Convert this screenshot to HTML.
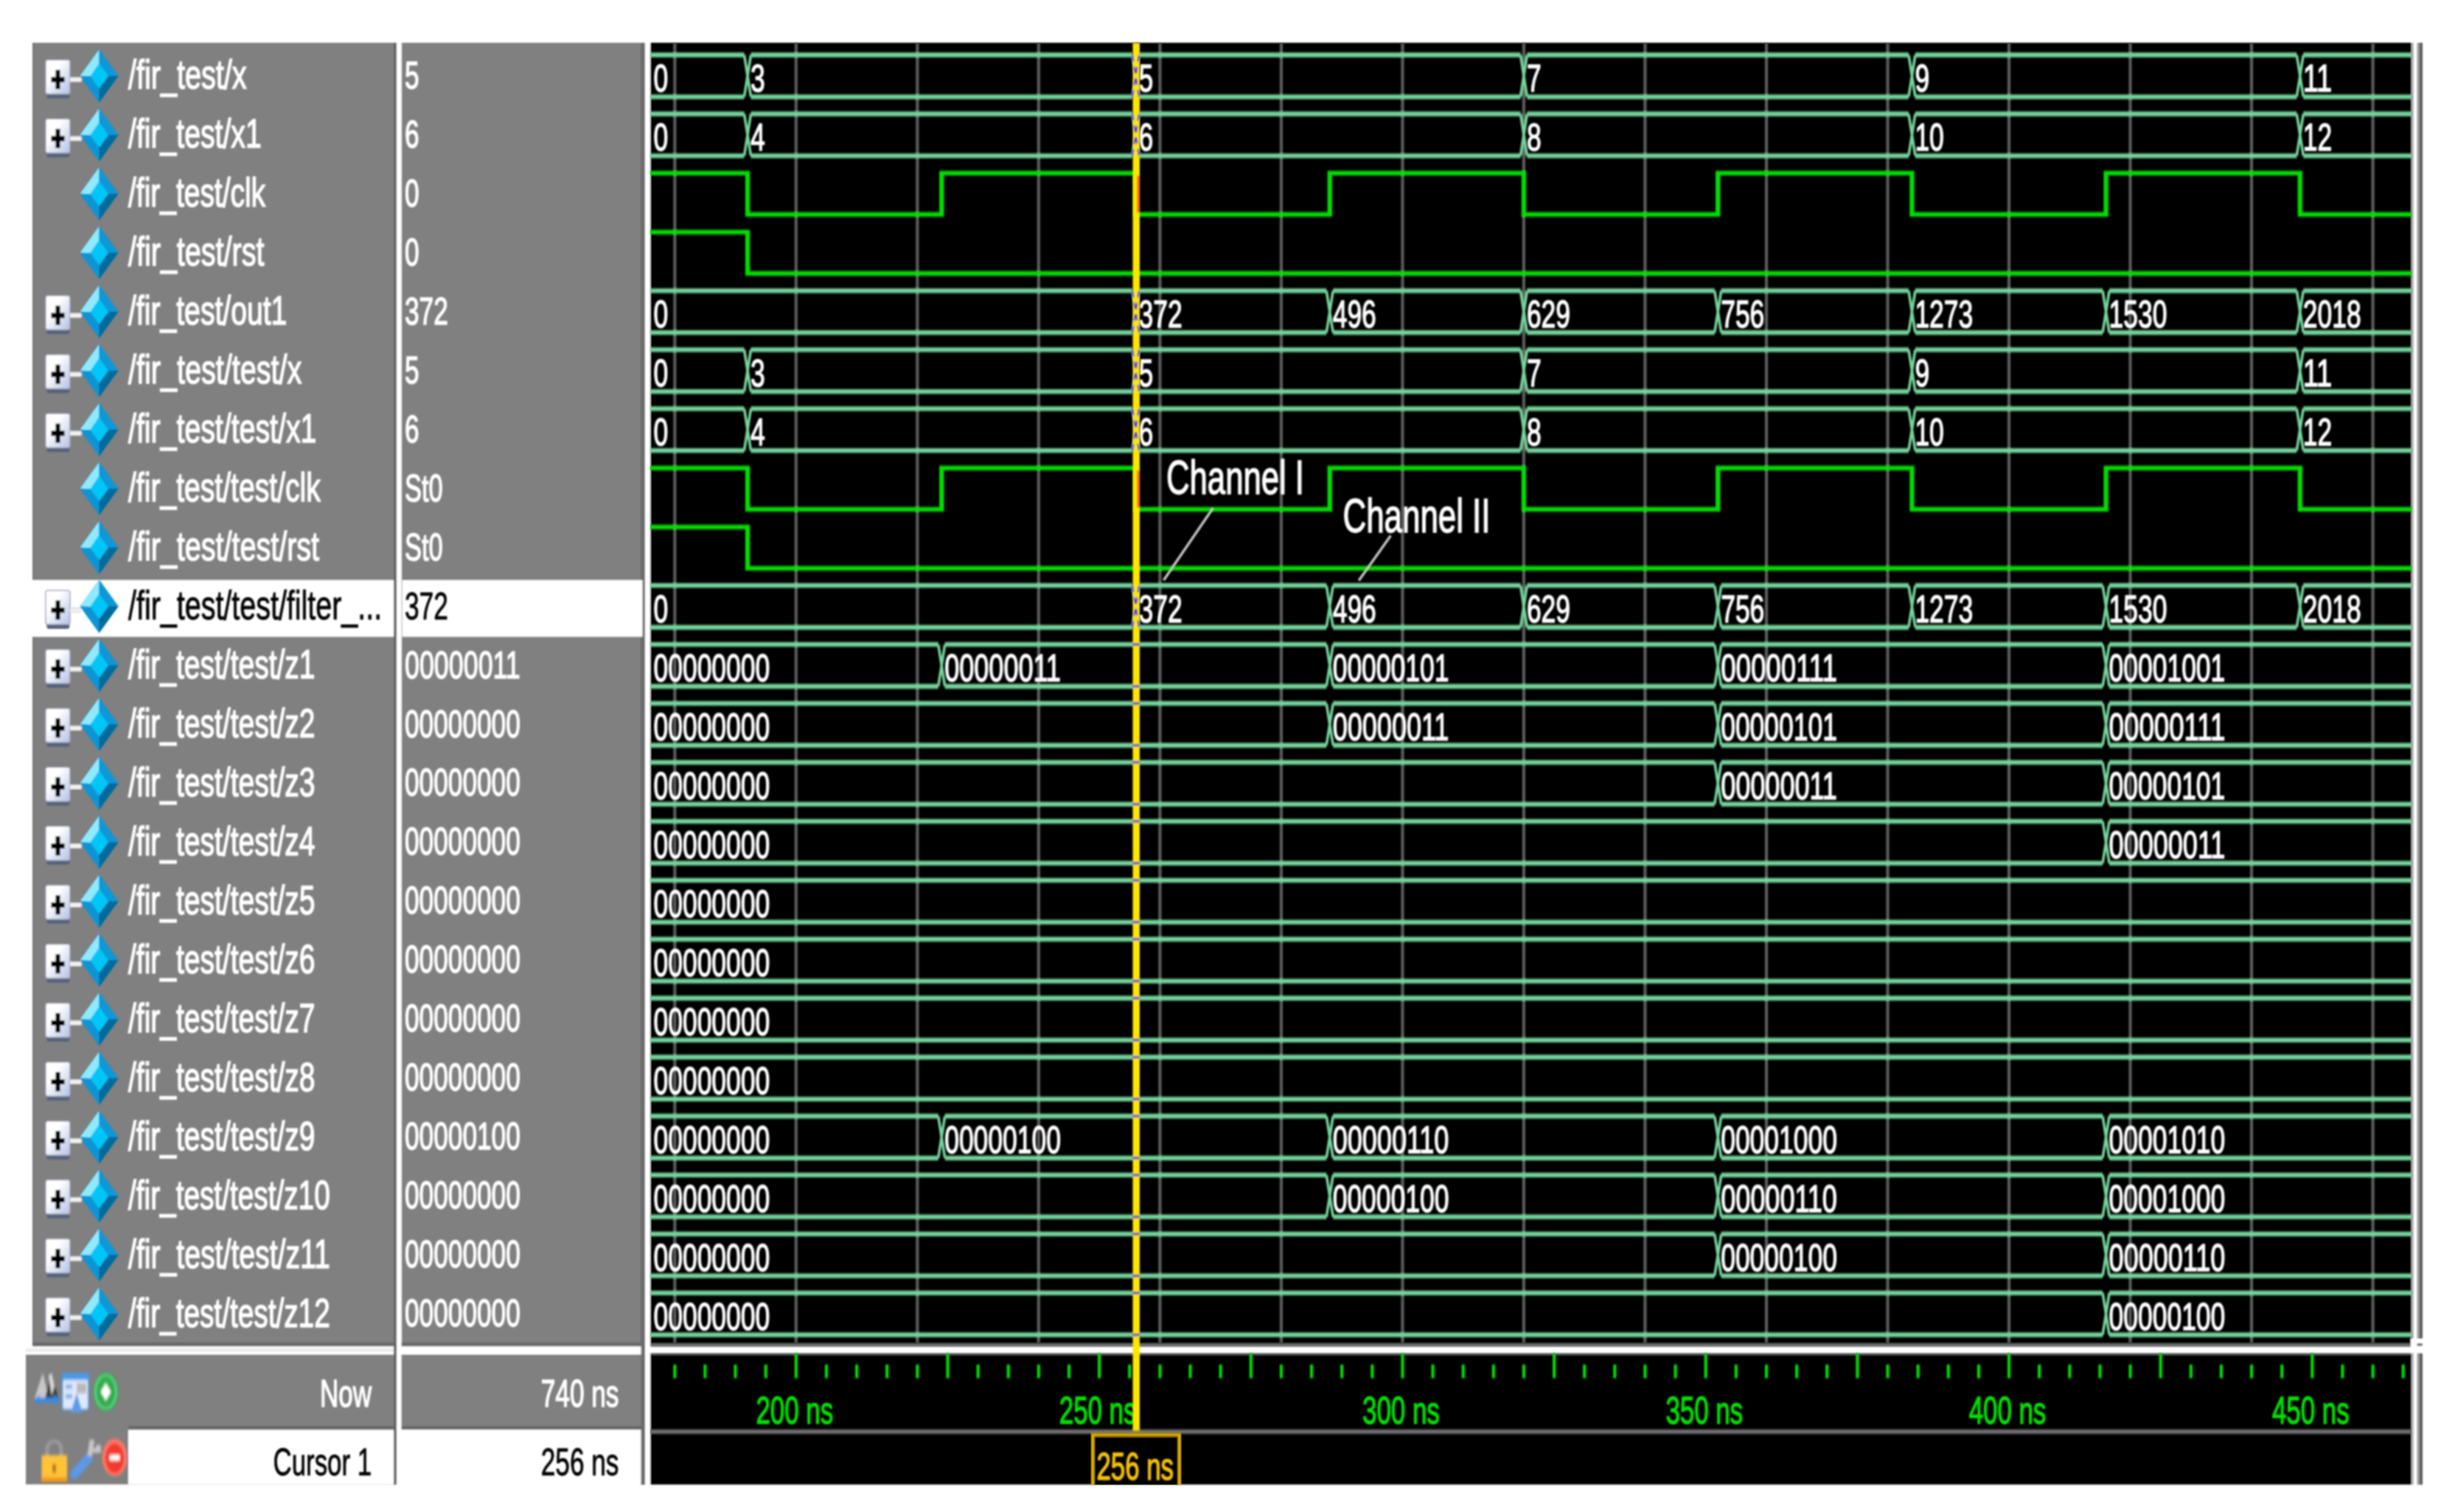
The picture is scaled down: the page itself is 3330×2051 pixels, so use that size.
<!DOCTYPE html>
<html lang="en"><head><meta charset="utf-8"><title>wave</title>
<style>html,body{margin:0;padding:0;background:#fff}body{width:3330px;height:2051px;overflow:hidden}svg{display:block}text{white-space:pre}</style></head>
<body>
<svg width="3330" height="2051" viewBox="0 0 3330 2051" font-family="'Liberation Sans', sans-serif">
<defs><filter id="bl" x="-2%" y="-2%" width="104%" height="104%"><feGaussianBlur stdDeviation="1.3 1.5"/></filter><filter id="bi" x="-5%" y="-5%" width="110%" height="110%"><feGaussianBlur stdDeviation="1.8 2.0"/></filter><filter id="bt" x="-2%" y="-2%" width="104%" height="104%"><feGaussianBlur stdDeviation="1.1 1.3"/></filter><linearGradient id="pb" x1="0" y1="0" x2="1" y2="1"><stop offset="0.35" stop-color="#ffffff"/><stop offset="1" stop-color="#b4c0e6"/></linearGradient><g id="dia"><polygon points="0,-36 26,0 0,36 -26,0" fill="#0a86c2"/><polygon points="0,-36 0,-17 -12,0.5 -26,0" fill="#8eeaff"/><polygon points="0,-36 26,0 12.5,0 0,-17" fill="#0a98d8"/><polygon points="-26,0 -12,0.5 0,17 0,36" fill="#0a94d4"/><polygon points="26,0 0,36 0,17 12.5,0" fill="#056a9c"/><polygon points="0,-17 12.5,0 0,17 -12,0.5" fill="#06c6f8"/></g><g id="plus"><rect x="-15.2" y="-20" width="31" height="46.2" rx="3" fill="#56637c"/><rect x="-16.6" y="-26.0" width="33" height="46.2" rx="3" fill="url(#pb)" stroke="#a4a8b8" stroke-width="1.5"/><rect x="-9" y="-2.7" width="18" height="7" fill="#000"/><rect x="-3" y="-12.4" width="6" height="26" fill="#000"/><rect x="16.5" y="-2.8" width="15.5" height="7" fill="#dcdcdc"/><rect x="16.5" y="-0.8" width="15.5" height="3.5" fill="#f4f4f4"/></g></defs>
<rect x="0.0" y="0.0" width="3330.0" height="2051.0" fill="#fff"/>
<g filter="url(#bt)">
<rect x="44.0" y="58.0" width="490.0" height="1764.0" fill="#808080"/>
<rect x="44.0" y="58.0" width="2.5" height="1764.0" fill="#767676"/>
<rect x="544.5" y="58.0" width="325.0" height="1764.0" fill="#808080"/>
<rect x="534.0" y="58.0" width="4.2" height="1956.0" fill="#666"/>
<rect x="538.2" y="58.0" width="6.3" height="1956.0" fill="#fff"/>
<rect x="869.0" y="58.0" width="6.0" height="1956.0" fill="#6c6c6c"/>
<rect x="875.0" y="58.0" width="7.5" height="1956.0" fill="#fff"/>
<rect x="44.0" y="786.9" width="490.0" height="76.8" fill="#fff"/>
<rect x="545.5" y="786.9" width="326.0" height="76.8" fill="#fff"/>
<rect x="44.0" y="1821.0" width="490.0" height="5.5" fill="#6a6a6a"/>
<rect x="544.5" y="1821.0" width="325.0" height="5.5" fill="#6a6a6a"/>
<rect x="35.0" y="1826.5" width="499.0" height="11.0" fill="#fff"/>
<rect x="544.5" y="1826.5" width="325.0" height="11.0" fill="#fff"/>
<rect x="35.0" y="1829.0" width="499.0" height="5.0" fill="#ececec"/>
<rect x="35.0" y="1837.5" width="499.0" height="176.0" fill="#808080"/>
<rect x="544.5" y="1837.5" width="325.0" height="98.0" fill="#808080"/>
<rect x="174.0" y="1934.5" width="360.0" height="5.0" fill="#666"/>
<rect x="544.5" y="1934.5" width="325.0" height="5.0" fill="#666"/>
<rect x="174.0" y="1939.5" width="360.0" height="74.0" fill="#fff"/>
<rect x="544.5" y="1939.5" width="325.0" height="74.0" fill="#fff"/>
<rect x="882.0" y="58.0" width="2389.0" height="1765.0" fill="#000"/>
<rect x="882.0" y="1822.5" width="2389.0" height="4.5" fill="#707070"/>
<rect x="882.0" y="1835.5" width="2389.0" height="3.0" fill="#555"/>
<rect x="882.0" y="1838.0" width="2389.0" height="175.7" fill="#000"/>
<rect x="3271.0" y="58.0" width="3.0" height="1956.0" fill="#b8b8b8"/>
<rect x="3278.6" y="58.0" width="3.4" height="1956.0" fill="#9a9a9a"/>
<rect x="3282.0" y="58.0" width="4.0" height="1956.0" fill="#5c5c5c"/>
<rect x="3270.0" y="1816.0" width="20.0" height="19.5" fill="#fff"/>
<rect x="3278.6" y="1822.0" width="7.4" height="4.0" fill="#777"/>
</g>
<g filter="url(#bt)">
<use href="#plus" x="78.5" y="107.2"/>
<use href="#dia" x="134.5" y="102.9"/>
<text x="174.0" y="120.3" font-size="55" fill="#fff" stroke="#fff" stroke-width="1.5" textLength="160.6" lengthAdjust="spacingAndGlyphs">/fir_test/x</text>
<text x="549.0" y="119.8" font-size="52" fill="#fff" stroke="#fff" stroke-width="1.5" textLength="19.6" lengthAdjust="spacingAndGlyphs">5</text>
<use href="#plus" x="78.5" y="187.2"/>
<use href="#dia" x="134.5" y="182.9"/>
<text x="174.0" y="200.3" font-size="55" fill="#fff" stroke="#fff" stroke-width="1.5" textLength="180.7" lengthAdjust="spacingAndGlyphs">/fir_test/x1</text>
<text x="549.0" y="199.8" font-size="52" fill="#fff" stroke="#fff" stroke-width="1.5" textLength="19.6" lengthAdjust="spacingAndGlyphs">6</text>
<use href="#dia" x="134.5" y="262.8"/>
<text x="174.0" y="280.2" font-size="55" fill="#fff" stroke="#fff" stroke-width="1.5" textLength="186.1" lengthAdjust="spacingAndGlyphs">/fir_test/clk</text>
<text x="549.0" y="279.7" font-size="52" fill="#fff" stroke="#fff" stroke-width="1.5" textLength="19.6" lengthAdjust="spacingAndGlyphs">0</text>
<use href="#dia" x="134.5" y="342.8"/>
<text x="174.0" y="360.2" font-size="55" fill="#fff" stroke="#fff" stroke-width="1.5" textLength="184.4" lengthAdjust="spacingAndGlyphs">/fir_test/rst</text>
<text x="549.0" y="359.7" font-size="52" fill="#fff" stroke="#fff" stroke-width="1.5" textLength="19.6" lengthAdjust="spacingAndGlyphs">0</text>
<use href="#plus" x="78.5" y="427.1"/>
<use href="#dia" x="134.5" y="422.8"/>
<text x="174.0" y="440.2" font-size="55" fill="#fff" stroke="#fff" stroke-width="1.5" textLength="215.4" lengthAdjust="spacingAndGlyphs">/fir_test/out1</text>
<text x="549.0" y="439.7" font-size="52" fill="#fff" stroke="#fff" stroke-width="1.5" textLength="58.8" lengthAdjust="spacingAndGlyphs">372</text>
<use href="#plus" x="78.5" y="507.1"/>
<use href="#dia" x="134.5" y="502.8"/>
<text x="174.0" y="520.1" font-size="55" fill="#fff" stroke="#fff" stroke-width="1.5" textLength="235.2" lengthAdjust="spacingAndGlyphs">/fir_test/test/x</text>
<text x="549.0" y="519.6" font-size="52" fill="#fff" stroke="#fff" stroke-width="1.5" textLength="19.6" lengthAdjust="spacingAndGlyphs">5</text>
<use href="#plus" x="78.5" y="587.0"/>
<use href="#dia" x="134.5" y="582.7"/>
<text x="174.0" y="600.1" font-size="55" fill="#fff" stroke="#fff" stroke-width="1.5" textLength="255.4" lengthAdjust="spacingAndGlyphs">/fir_test/test/x1</text>
<text x="549.0" y="599.6" font-size="52" fill="#fff" stroke="#fff" stroke-width="1.5" textLength="19.6" lengthAdjust="spacingAndGlyphs">6</text>
<use href="#dia" x="134.5" y="662.7"/>
<text x="174.0" y="680.1" font-size="55" fill="#fff" stroke="#fff" stroke-width="1.5" textLength="260.8" lengthAdjust="spacingAndGlyphs">/fir_test/test/clk</text>
<text x="549.0" y="679.6" font-size="52" fill="#fff" stroke="#fff" stroke-width="1.5" textLength="51.6" lengthAdjust="spacingAndGlyphs">St0</text>
<use href="#dia" x="134.5" y="742.7"/>
<text x="174.0" y="760.1" font-size="55" fill="#fff" stroke="#fff" stroke-width="1.5" textLength="259.1" lengthAdjust="spacingAndGlyphs">/fir_test/test/rst</text>
<text x="549.0" y="759.6" font-size="52" fill="#fff" stroke="#fff" stroke-width="1.5" textLength="51.6" lengthAdjust="spacingAndGlyphs">St0</text>
<use href="#plus" x="78.5" y="826.9"/>
<use href="#dia" x="134.5" y="822.6"/>
<text x="174.0" y="840.0" font-size="55" fill="#000" stroke="#000" stroke-width="0.9" textLength="344.2" lengthAdjust="spacingAndGlyphs">/fir_test/test/filter_...</text>
<text x="549.0" y="839.5" font-size="52" fill="#000" stroke="#000" stroke-width="0.9" textLength="58.8" lengthAdjust="spacingAndGlyphs">372</text>
<use href="#plus" x="78.5" y="906.9"/>
<use href="#dia" x="134.5" y="902.6"/>
<text x="174.0" y="920.0" font-size="55" fill="#fff" stroke="#fff" stroke-width="1.5" textLength="253.5" lengthAdjust="spacingAndGlyphs">/fir_test/test/z1</text>
<text x="549.0" y="919.5" font-size="52" fill="#fff" stroke="#fff" stroke-width="1.5" textLength="156.8" lengthAdjust="spacingAndGlyphs">00000011</text>
<use href="#plus" x="78.5" y="986.9"/>
<use href="#dia" x="134.5" y="982.6"/>
<text x="174.0" y="1000.0" font-size="55" fill="#fff" stroke="#fff" stroke-width="1.5" textLength="253.5" lengthAdjust="spacingAndGlyphs">/fir_test/test/z2</text>
<text x="549.0" y="999.5" font-size="52" fill="#fff" stroke="#fff" stroke-width="1.5" textLength="156.8" lengthAdjust="spacingAndGlyphs">00000000</text>
<use href="#plus" x="78.5" y="1066.8"/>
<use href="#dia" x="134.5" y="1062.5"/>
<text x="174.0" y="1079.9" font-size="55" fill="#fff" stroke="#fff" stroke-width="1.5" textLength="253.5" lengthAdjust="spacingAndGlyphs">/fir_test/test/z3</text>
<text x="549.0" y="1079.4" font-size="52" fill="#fff" stroke="#fff" stroke-width="1.5" textLength="156.8" lengthAdjust="spacingAndGlyphs">00000000</text>
<use href="#plus" x="78.5" y="1146.8"/>
<use href="#dia" x="134.5" y="1142.5"/>
<text x="174.0" y="1159.9" font-size="55" fill="#fff" stroke="#fff" stroke-width="1.5" textLength="253.5" lengthAdjust="spacingAndGlyphs">/fir_test/test/z4</text>
<text x="549.0" y="1159.4" font-size="52" fill="#fff" stroke="#fff" stroke-width="1.5" textLength="156.8" lengthAdjust="spacingAndGlyphs">00000000</text>
<use href="#plus" x="78.5" y="1226.8"/>
<use href="#dia" x="134.5" y="1222.5"/>
<text x="174.0" y="1239.9" font-size="55" fill="#fff" stroke="#fff" stroke-width="1.5" textLength="253.5" lengthAdjust="spacingAndGlyphs">/fir_test/test/z5</text>
<text x="549.0" y="1239.4" font-size="52" fill="#fff" stroke="#fff" stroke-width="1.5" textLength="156.8" lengthAdjust="spacingAndGlyphs">00000000</text>
<use href="#plus" x="78.5" y="1306.8"/>
<use href="#dia" x="134.5" y="1302.5"/>
<text x="174.0" y="1319.8" font-size="55" fill="#fff" stroke="#fff" stroke-width="1.5" textLength="253.5" lengthAdjust="spacingAndGlyphs">/fir_test/test/z6</text>
<text x="549.0" y="1319.3" font-size="52" fill="#fff" stroke="#fff" stroke-width="1.5" textLength="156.8" lengthAdjust="spacingAndGlyphs">00000000</text>
<use href="#plus" x="78.5" y="1386.7"/>
<use href="#dia" x="134.5" y="1382.4"/>
<text x="174.0" y="1399.8" font-size="55" fill="#fff" stroke="#fff" stroke-width="1.5" textLength="253.5" lengthAdjust="spacingAndGlyphs">/fir_test/test/z7</text>
<text x="549.0" y="1399.3" font-size="52" fill="#fff" stroke="#fff" stroke-width="1.5" textLength="156.8" lengthAdjust="spacingAndGlyphs">00000000</text>
<use href="#plus" x="78.5" y="1466.7"/>
<use href="#dia" x="134.5" y="1462.4"/>
<text x="174.0" y="1479.8" font-size="55" fill="#fff" stroke="#fff" stroke-width="1.5" textLength="253.5" lengthAdjust="spacingAndGlyphs">/fir_test/test/z8</text>
<text x="549.0" y="1479.3" font-size="52" fill="#fff" stroke="#fff" stroke-width="1.5" textLength="156.8" lengthAdjust="spacingAndGlyphs">00000000</text>
<use href="#plus" x="78.5" y="1546.7"/>
<use href="#dia" x="134.5" y="1542.4"/>
<text x="174.0" y="1559.8" font-size="55" fill="#fff" stroke="#fff" stroke-width="1.5" textLength="253.5" lengthAdjust="spacingAndGlyphs">/fir_test/test/z9</text>
<text x="549.0" y="1559.3" font-size="52" fill="#fff" stroke="#fff" stroke-width="1.5" textLength="156.8" lengthAdjust="spacingAndGlyphs">00000100</text>
<use href="#plus" x="78.5" y="1626.6"/>
<use href="#dia" x="134.5" y="1622.3"/>
<text x="174.0" y="1639.7" font-size="55" fill="#fff" stroke="#fff" stroke-width="1.5" textLength="273.7" lengthAdjust="spacingAndGlyphs">/fir_test/test/z10</text>
<text x="549.0" y="1639.2" font-size="52" fill="#fff" stroke="#fff" stroke-width="1.5" textLength="156.8" lengthAdjust="spacingAndGlyphs">00000000</text>
<use href="#plus" x="78.5" y="1706.6"/>
<use href="#dia" x="134.5" y="1702.3"/>
<text x="174.0" y="1719.7" font-size="55" fill="#fff" stroke="#fff" stroke-width="1.5" textLength="273.7" lengthAdjust="spacingAndGlyphs">/fir_test/test/z11</text>
<text x="549.0" y="1719.2" font-size="52" fill="#fff" stroke="#fff" stroke-width="1.5" textLength="156.8" lengthAdjust="spacingAndGlyphs">00000000</text>
<use href="#plus" x="78.5" y="1786.6"/>
<use href="#dia" x="134.5" y="1782.3"/>
<text x="174.0" y="1799.7" font-size="55" fill="#fff" stroke="#fff" stroke-width="1.5" textLength="273.7" lengthAdjust="spacingAndGlyphs">/fir_test/test/z12</text>
<text x="549.0" y="1799.2" font-size="52" fill="#fff" stroke="#fff" stroke-width="1.5" textLength="156.8" lengthAdjust="spacingAndGlyphs">00000000</text>
</g>
<g filter="url(#bt)">
<text x="434.0" y="1907.5" font-size="52" fill="#fff" stroke="#fff" stroke-width="1.5" textLength="70.0" lengthAdjust="spacingAndGlyphs">Now</text>
<text x="370.6" y="2001.0" font-size="52" fill="#000" stroke="#000" stroke-width="0.9" textLength="133.4" lengthAdjust="spacingAndGlyphs">Cursor 1</text>
<text x="733.7" y="1907.5" font-size="52" fill="#fff" stroke="#fff" stroke-width="1.5" textLength="105.8" lengthAdjust="spacingAndGlyphs">740 ns</text>
<text x="733.7" y="2001.0" font-size="52" fill="#000" stroke="#000" stroke-width="0.9" textLength="105.8" lengthAdjust="spacingAndGlyphs">256 ns</text>
</g>
<g filter="url(#bi)">
<polygon points="47,1897 58,1862 66,1897" fill="#c8c8c8"/>
<polygon points="61,1897 70,1862 79,1897" fill="#3a3a3a"/>
<polygon points="66,1866 70,1862 74,1880 70,1893" fill="#d8d8d8"/>
<rect x="50" y="1896" width="27" height="6" fill="#2f8cf0"/>
<polygon points="46,1899 54,1892 54,1906" fill="#2f8cf0"/><polygon points="81,1899 73,1892 73,1906" fill="#2f8cf0"/>
<rect x="84.5" y="1863" width="35.5" height="49" rx="2" fill="#dfe9fa" stroke="#4a94e6" stroke-width="2"/>
<rect x="84.5" y="1863" width="35.5" height="9" fill="#4a9ae8"/>
<rect x="89" y="1878" width="9" height="6" fill="#7fb0f0"/><rect x="89" y="1891" width="9" height="6" fill="#7fb0f0"/>
<rect x="104" y="1876" width="13" height="14" fill="#b9b9b9"/>
<polygon points="96,1916 104,1890 112,1916" fill="#5a9bea"/>
<ellipse cx="143.5" cy="1888" rx="17" ry="26.5" fill="#2fae4e"/>
<ellipse cx="143.5" cy="1888" rx="14" ry="22.5" fill="none" stroke="#62cf80" stroke-width="3"/>
<polygon points="143.5,1876 150.5,1888 143.5,1900 136.5,1888" fill="#fff"/>
<path d="M64,1976 V1966 a9.5,11 0 0 1 19,0 V1976" fill="none" stroke="#9a9a9a" stroke-width="5"/>
<rect x="56.5" y="1974" width="34.5" height="36" fill="#ffc338"/>
<rect x="56.5" y="2004" width="34.5" height="6" fill="#f59a14"/>
<rect x="71" y="1986" width="5" height="12" fill="#b87818"/>
<line x1="101" y1="2000" x2="120" y2="1978" stroke="#5b98ea" stroke-width="12" stroke-linecap="round"/>
<path d="M121.5,1975 L125,1953 M125,1967.5 L133.5,1967.5 L133.5,1960" fill="none" stroke="#c6c6c6" stroke-width="6.5"/>
<ellipse cx="155.5" cy="1977" rx="17" ry="25.5" fill="#ff7468"/>
<ellipse cx="155.5" cy="1978" rx="12.5" ry="20" fill="#f23a2c"/>
<rect x="148.5" y="1973.5" width="14" height="7.5" fill="#fff"/>
</g>
<clipPath id="wc"><rect x="882" y="58" width="2389" height="1956"/></clipPath>
<g clip-path="url(#wc)"><g filter="url(#bl)">
<line x1="915.3" y1="58.0" x2="915.3" y2="1822.0" stroke="#5c5c5c" stroke-width="4.2"/>
<line x1="1079.8" y1="58.0" x2="1079.8" y2="1822.0" stroke="#5c5c5c" stroke-width="4.2"/>
<line x1="1244.3" y1="58.0" x2="1244.3" y2="1822.0" stroke="#5c5c5c" stroke-width="4.2"/>
<line x1="1408.8" y1="58.0" x2="1408.8" y2="1822.0" stroke="#5c5c5c" stroke-width="4.2"/>
<line x1="1573.4" y1="58.0" x2="1573.4" y2="1822.0" stroke="#5c5c5c" stroke-width="4.2"/>
<line x1="1737.9" y1="58.0" x2="1737.9" y2="1822.0" stroke="#5c5c5c" stroke-width="4.2"/>
<line x1="1902.4" y1="58.0" x2="1902.4" y2="1822.0" stroke="#5c5c5c" stroke-width="4.2"/>
<line x1="2066.9" y1="58.0" x2="2066.9" y2="1822.0" stroke="#5c5c5c" stroke-width="4.2"/>
<line x1="2231.4" y1="58.0" x2="2231.4" y2="1822.0" stroke="#5c5c5c" stroke-width="4.2"/>
<line x1="2396.0" y1="58.0" x2="2396.0" y2="1822.0" stroke="#5c5c5c" stroke-width="4.2"/>
<line x1="2560.5" y1="58.0" x2="2560.5" y2="1822.0" stroke="#5c5c5c" stroke-width="4.2"/>
<line x1="2725.0" y1="58.0" x2="2725.0" y2="1822.0" stroke="#5c5c5c" stroke-width="4.2"/>
<line x1="2889.5" y1="58.0" x2="2889.5" y2="1822.0" stroke="#5c5c5c" stroke-width="4.2"/>
<line x1="3054.0" y1="58.0" x2="3054.0" y2="1822.0" stroke="#5c5c5c" stroke-width="4.2"/>
<line x1="3218.6" y1="58.0" x2="3218.6" y2="1822.0" stroke="#5c5c5c" stroke-width="4.2"/>
<path d="M872.0,74.5H1009.5M872.0,131.3H1009.5M1018.5,74.5H1536.0M1018.5,131.3H1536.0M1545.0,74.5H2062.4M1545.0,131.3H2062.4M2071.4,74.5H2588.9M2071.4,131.3H2588.9M2597.9,74.5H3115.3M2597.9,131.3H3115.3M3124.3,74.5H3291.0M3124.3,131.3H3291.0" stroke="#74d49c" stroke-width="6.3" fill="none"/>
<path d="M1009.5,74.5L1018.5,131.3M1009.5,131.3L1018.5,74.5M1536.0,74.5L1545.0,131.3M1536.0,131.3L1545.0,74.5M2062.4,74.5L2071.4,131.3M2062.4,131.3L2071.4,74.5M2588.9,74.5L2597.9,131.3M2588.9,131.3L2597.9,74.5M3115.3,74.5L3124.3,131.3M3115.3,131.3L3124.3,74.5" stroke="#74d49c" stroke-width="3.6" fill="none"/>
<path d="M872.0,154.5H1009.5M872.0,211.3H1009.5M1018.5,154.5H1536.0M1018.5,211.3H1536.0M1545.0,154.5H2062.4M1545.0,211.3H2062.4M2071.4,154.5H2588.9M2071.4,211.3H2588.9M2597.9,154.5H3115.3M2597.9,211.3H3115.3M3124.3,154.5H3291.0M3124.3,211.3H3291.0" stroke="#74d49c" stroke-width="6.3" fill="none"/>
<path d="M1009.5,154.5L1018.5,211.3M1009.5,211.3L1018.5,154.5M1536.0,154.5L1545.0,211.3M1536.0,211.3L1545.0,154.5M2062.4,154.5L2071.4,211.3M2062.4,211.3L2071.4,154.5M2588.9,154.5L2597.9,211.3M2588.9,211.3L2597.9,154.5M3115.3,154.5L3124.3,211.3M3115.3,211.3L3124.3,154.5" stroke="#74d49c" stroke-width="3.6" fill="none"/>
<path d="M872.0,234.9H1014.0V290.9H1277.2V234.9H1540.5V290.9H1803.7V234.9H2066.9V290.9H2330.2V234.9H2593.4V290.9H2856.6V234.9H3119.8V290.9H3291" stroke="#00dc00" stroke-width="6.3" fill="none" stroke-linejoin="miter"/>
<path d="M872.0,314.9H1014.0V370.9H3291" stroke="#00dc00" stroke-width="6.3" fill="none" stroke-linejoin="miter"/>
<path d="M872.0,394.4H1536.0M872.0,451.2H1536.0M1545.0,394.4H1799.2M1545.0,451.2H1799.2M1808.2,394.4H2062.4M1808.2,451.2H2062.4M2071.4,394.4H2325.7M2071.4,451.2H2325.7M2334.7,394.4H2588.9M2334.7,451.2H2588.9M2597.9,394.4H2852.1M2597.9,451.2H2852.1M2861.1,394.4H3115.3M2861.1,451.2H3115.3M3124.3,394.4H3291.0M3124.3,451.2H3291.0" stroke="#74d49c" stroke-width="6.3" fill="none"/>
<path d="M1536.0,394.4L1545.0,451.2M1536.0,451.2L1545.0,394.4M1799.2,394.4L1808.2,451.2M1799.2,451.2L1808.2,394.4M2062.4,394.4L2071.4,451.2M2062.4,451.2L2071.4,394.4M2325.7,394.4L2334.7,451.2M2325.7,451.2L2334.7,394.4M2588.9,394.4L2597.9,451.2M2588.9,451.2L2597.9,394.4M2852.1,394.4L2861.1,451.2M2852.1,451.2L2861.1,394.4M3115.3,394.4L3124.3,451.2M3115.3,451.2L3124.3,394.4" stroke="#74d49c" stroke-width="3.6" fill="none"/>
<path d="M872.0,474.4H1009.5M872.0,531.1H1009.5M1018.5,474.4H1536.0M1018.5,531.1H1536.0M1545.0,474.4H2062.4M1545.0,531.1H2062.4M2071.4,474.4H2588.9M2071.4,531.1H2588.9M2597.9,474.4H3115.3M2597.9,531.1H3115.3M3124.3,474.4H3291.0M3124.3,531.1H3291.0" stroke="#74d49c" stroke-width="6.3" fill="none"/>
<path d="M1009.5,474.4L1018.5,531.1M1009.5,531.1L1018.5,474.4M1536.0,474.4L1545.0,531.1M1536.0,531.1L1545.0,474.4M2062.4,474.4L2071.4,531.1M2062.4,531.1L2071.4,474.4M2588.9,474.4L2597.9,531.1M2588.9,531.1L2597.9,474.4M3115.3,474.4L3124.3,531.1M3115.3,531.1L3124.3,474.4" stroke="#74d49c" stroke-width="3.6" fill="none"/>
<path d="M872.0,554.3H1009.5M872.0,611.1H1009.5M1018.5,554.3H1536.0M1018.5,611.1H1536.0M1545.0,554.3H2062.4M1545.0,611.1H2062.4M2071.4,554.3H2588.9M2071.4,611.1H2588.9M2597.9,554.3H3115.3M2597.9,611.1H3115.3M3124.3,554.3H3291.0M3124.3,611.1H3291.0" stroke="#74d49c" stroke-width="6.3" fill="none"/>
<path d="M1009.5,554.3L1018.5,611.1M1009.5,611.1L1018.5,554.3M1536.0,554.3L1545.0,611.1M1536.0,611.1L1545.0,554.3M2062.4,554.3L2071.4,611.1M2062.4,611.1L2071.4,554.3M2588.9,554.3L2597.9,611.1M2588.9,611.1L2597.9,554.3M3115.3,554.3L3124.3,611.1M3115.3,611.1L3124.3,554.3" stroke="#74d49c" stroke-width="3.6" fill="none"/>
<path d="M872.0,634.8H1014.0V690.8H1277.2V634.8H1540.5V690.8H1803.7V634.8H2066.9V690.8H2330.2V634.8H2593.4V690.8H2856.6V634.8H3119.8V690.8H3291" stroke="#00dc00" stroke-width="6.3" fill="none" stroke-linejoin="miter"/>
<path d="M872.0,714.8H1014.0V770.8H3291" stroke="#00dc00" stroke-width="6.3" fill="none" stroke-linejoin="miter"/>
<path d="M872.0,794.2H1536.0M872.0,851.0H1536.0M1545.0,794.2H1799.2M1545.0,851.0H1799.2M1808.2,794.2H2062.4M1808.2,851.0H2062.4M2071.4,794.2H2325.7M2071.4,851.0H2325.7M2334.7,794.2H2588.9M2334.7,851.0H2588.9M2597.9,794.2H2852.1M2597.9,851.0H2852.1M2861.1,794.2H3115.3M2861.1,851.0H3115.3M3124.3,794.2H3291.0M3124.3,851.0H3291.0" stroke="#74d49c" stroke-width="6.3" fill="none"/>
<path d="M1536.0,794.2L1545.0,851.0M1536.0,851.0L1545.0,794.2M1799.2,794.2L1808.2,851.0M1799.2,851.0L1808.2,794.2M2062.4,794.2L2071.4,851.0M2062.4,851.0L2071.4,794.2M2325.7,794.2L2334.7,851.0M2325.7,851.0L2334.7,794.2M2588.9,794.2L2597.9,851.0M2588.9,851.0L2597.9,794.2M2852.1,794.2L2861.1,851.0M2852.1,851.0L2861.1,794.2M3115.3,794.2L3124.3,851.0M3115.3,851.0L3124.3,794.2" stroke="#74d49c" stroke-width="3.6" fill="none"/>
<path d="M872.0,874.2H1272.7M872.0,931.0H1272.7M1281.7,874.2H1799.2M1281.7,931.0H1799.2M1808.2,874.2H2325.7M1808.2,931.0H2325.7M2334.7,874.2H2852.1M2334.7,931.0H2852.1M2861.1,874.2H3291.0M2861.1,931.0H3291.0" stroke="#74d49c" stroke-width="6.3" fill="none"/>
<path d="M1272.7,874.2L1281.7,931.0M1272.7,931.0L1281.7,874.2M1799.2,874.2L1808.2,931.0M1799.2,931.0L1808.2,874.2M2325.7,874.2L2334.7,931.0M2325.7,931.0L2334.7,874.2M2852.1,874.2L2861.1,931.0M2852.1,931.0L2861.1,874.2" stroke="#74d49c" stroke-width="3.6" fill="none"/>
<path d="M872.0,954.2H1799.2M872.0,1011.0H1799.2M1808.2,954.2H2325.7M1808.2,1011.0H2325.7M2334.7,954.2H2852.1M2334.7,1011.0H2852.1M2861.1,954.2H3291.0M2861.1,1011.0H3291.0" stroke="#74d49c" stroke-width="6.3" fill="none"/>
<path d="M1799.2,954.2L1808.2,1011.0M1799.2,1011.0L1808.2,954.2M2325.7,954.2L2334.7,1011.0M2325.7,1011.0L2334.7,954.2M2852.1,954.2L2861.1,1011.0M2852.1,1011.0L2861.1,954.2" stroke="#74d49c" stroke-width="3.6" fill="none"/>
<path d="M872.0,1034.1H2325.7M872.0,1090.9H2325.7M2334.7,1034.1H2852.1M2334.7,1090.9H2852.1M2861.1,1034.1H3291.0M2861.1,1090.9H3291.0" stroke="#74d49c" stroke-width="6.3" fill="none"/>
<path d="M2325.7,1034.1L2334.7,1090.9M2325.7,1090.9L2334.7,1034.1M2852.1,1034.1L2861.1,1090.9M2852.1,1090.9L2861.1,1034.1" stroke="#74d49c" stroke-width="3.6" fill="none"/>
<path d="M872.0,1114.1H2852.1M872.0,1170.9H2852.1M2861.1,1114.1H3291.0M2861.1,1170.9H3291.0" stroke="#74d49c" stroke-width="6.3" fill="none"/>
<path d="M2852.1,1114.1L2861.1,1170.9M2852.1,1170.9L2861.1,1114.1" stroke="#74d49c" stroke-width="3.6" fill="none"/>
<path d="M872.0,1194.1H3291.0M872.0,1250.9H3291.0" stroke="#74d49c" stroke-width="6.3" fill="none"/>
<path d="M872.0,1274.0H3291.0M872.0,1330.8H3291.0" stroke="#74d49c" stroke-width="6.3" fill="none"/>
<path d="M872.0,1354.0H3291.0M872.0,1410.8H3291.0" stroke="#74d49c" stroke-width="6.3" fill="none"/>
<path d="M872.0,1434.0H3291.0M872.0,1490.8H3291.0" stroke="#74d49c" stroke-width="6.3" fill="none"/>
<path d="M872.0,1514.0H1272.7M872.0,1570.8H1272.7M1281.7,1514.0H1799.2M1281.7,1570.8H1799.2M1808.2,1514.0H2325.7M1808.2,1570.8H2325.7M2334.7,1514.0H2852.1M2334.7,1570.8H2852.1M2861.1,1514.0H3291.0M2861.1,1570.8H3291.0" stroke="#74d49c" stroke-width="6.3" fill="none"/>
<path d="M1272.7,1514.0L1281.7,1570.8M1272.7,1570.8L1281.7,1514.0M1799.2,1514.0L1808.2,1570.8M1799.2,1570.8L1808.2,1514.0M2325.7,1514.0L2334.7,1570.8M2325.7,1570.8L2334.7,1514.0M2852.1,1514.0L2861.1,1570.8M2852.1,1570.8L2861.1,1514.0" stroke="#74d49c" stroke-width="3.6" fill="none"/>
<path d="M872.0,1593.9H1799.2M872.0,1650.7H1799.2M1808.2,1593.9H2325.7M1808.2,1650.7H2325.7M2334.7,1593.9H2852.1M2334.7,1650.7H2852.1M2861.1,1593.9H3291.0M2861.1,1650.7H3291.0" stroke="#74d49c" stroke-width="6.3" fill="none"/>
<path d="M1799.2,1593.9L1808.2,1650.7M1799.2,1650.7L1808.2,1593.9M2325.7,1593.9L2334.7,1650.7M2325.7,1650.7L2334.7,1593.9M2852.1,1593.9L2861.1,1650.7M2852.1,1650.7L2861.1,1593.9" stroke="#74d49c" stroke-width="3.6" fill="none"/>
<path d="M872.0,1673.9H2325.7M872.0,1730.7H2325.7M2334.7,1673.9H2852.1M2334.7,1730.7H2852.1M2861.1,1673.9H3291.0M2861.1,1730.7H3291.0" stroke="#74d49c" stroke-width="6.3" fill="none"/>
<path d="M2325.7,1673.9L2334.7,1730.7M2325.7,1730.7L2334.7,1673.9M2852.1,1673.9L2861.1,1730.7M2852.1,1730.7L2861.1,1673.9" stroke="#74d49c" stroke-width="3.6" fill="none"/>
<path d="M872.0,1753.9H2852.1M872.0,1810.7H2852.1M2861.1,1753.9H3291.0M2861.1,1810.7H3291.0" stroke="#74d49c" stroke-width="6.3" fill="none"/>
<path d="M2852.1,1753.9L2861.1,1810.7M2852.1,1810.7L2861.1,1753.9" stroke="#74d49c" stroke-width="3.6" fill="none"/>
</g>
<g filter="url(#bt)">
<text x="886.5" y="124.1" font-size="51" fill="#fff" stroke="#fff" stroke-width="1.5" textLength="19.7" lengthAdjust="spacingAndGlyphs">0</text>
<text x="1018.0" y="124.1" font-size="51" fill="#fff" stroke="#fff" stroke-width="1.5" textLength="19.7" lengthAdjust="spacingAndGlyphs">3</text>
<text x="1544.5" y="124.1" font-size="51" fill="#fff" stroke="#fff" stroke-width="1.5" textLength="19.7" lengthAdjust="spacingAndGlyphs">5</text>
<text x="2070.9" y="124.1" font-size="51" fill="#fff" stroke="#fff" stroke-width="1.5" textLength="19.7" lengthAdjust="spacingAndGlyphs">7</text>
<text x="2597.4" y="124.1" font-size="51" fill="#fff" stroke="#fff" stroke-width="1.5" textLength="19.7" lengthAdjust="spacingAndGlyphs">9</text>
<text x="3123.8" y="124.1" font-size="51" fill="#fff" stroke="#fff" stroke-width="1.5" textLength="39.4" lengthAdjust="spacingAndGlyphs">11</text>
<text x="886.5" y="204.1" font-size="51" fill="#fff" stroke="#fff" stroke-width="1.5" textLength="19.7" lengthAdjust="spacingAndGlyphs">0</text>
<text x="1018.0" y="204.1" font-size="51" fill="#fff" stroke="#fff" stroke-width="1.5" textLength="19.7" lengthAdjust="spacingAndGlyphs">4</text>
<text x="1544.5" y="204.1" font-size="51" fill="#fff" stroke="#fff" stroke-width="1.5" textLength="19.7" lengthAdjust="spacingAndGlyphs">6</text>
<text x="2070.9" y="204.1" font-size="51" fill="#fff" stroke="#fff" stroke-width="1.5" textLength="19.7" lengthAdjust="spacingAndGlyphs">8</text>
<text x="2597.4" y="204.1" font-size="51" fill="#fff" stroke="#fff" stroke-width="1.5" textLength="39.4" lengthAdjust="spacingAndGlyphs">10</text>
<text x="3123.8" y="204.1" font-size="51" fill="#fff" stroke="#fff" stroke-width="1.5" textLength="39.4" lengthAdjust="spacingAndGlyphs">12</text>
<text x="886.5" y="444.0" font-size="51" fill="#fff" stroke="#fff" stroke-width="1.5" textLength="19.7" lengthAdjust="spacingAndGlyphs">0</text>
<text x="1544.5" y="444.0" font-size="51" fill="#fff" stroke="#fff" stroke-width="1.5" textLength="59.1" lengthAdjust="spacingAndGlyphs">372</text>
<text x="1807.7" y="444.0" font-size="51" fill="#fff" stroke="#fff" stroke-width="1.5" textLength="59.1" lengthAdjust="spacingAndGlyphs">496</text>
<text x="2070.9" y="444.0" font-size="51" fill="#fff" stroke="#fff" stroke-width="1.5" textLength="59.1" lengthAdjust="spacingAndGlyphs">629</text>
<text x="2334.2" y="444.0" font-size="51" fill="#fff" stroke="#fff" stroke-width="1.5" textLength="59.1" lengthAdjust="spacingAndGlyphs">756</text>
<text x="2597.4" y="444.0" font-size="51" fill="#fff" stroke="#fff" stroke-width="1.5" textLength="78.8" lengthAdjust="spacingAndGlyphs">1273</text>
<text x="2860.6" y="444.0" font-size="51" fill="#fff" stroke="#fff" stroke-width="1.5" textLength="78.8" lengthAdjust="spacingAndGlyphs">1530</text>
<text x="3123.8" y="444.0" font-size="51" fill="#fff" stroke="#fff" stroke-width="1.5" textLength="78.8" lengthAdjust="spacingAndGlyphs">2018</text>
<text x="886.5" y="524.0" font-size="51" fill="#fff" stroke="#fff" stroke-width="1.5" textLength="19.7" lengthAdjust="spacingAndGlyphs">0</text>
<text x="1018.0" y="524.0" font-size="51" fill="#fff" stroke="#fff" stroke-width="1.5" textLength="19.7" lengthAdjust="spacingAndGlyphs">3</text>
<text x="1544.5" y="524.0" font-size="51" fill="#fff" stroke="#fff" stroke-width="1.5" textLength="19.7" lengthAdjust="spacingAndGlyphs">5</text>
<text x="2070.9" y="524.0" font-size="51" fill="#fff" stroke="#fff" stroke-width="1.5" textLength="19.7" lengthAdjust="spacingAndGlyphs">7</text>
<text x="2597.4" y="524.0" font-size="51" fill="#fff" stroke="#fff" stroke-width="1.5" textLength="19.7" lengthAdjust="spacingAndGlyphs">9</text>
<text x="3123.8" y="524.0" font-size="51" fill="#fff" stroke="#fff" stroke-width="1.5" textLength="39.4" lengthAdjust="spacingAndGlyphs">11</text>
<text x="886.5" y="603.9" font-size="51" fill="#fff" stroke="#fff" stroke-width="1.5" textLength="19.7" lengthAdjust="spacingAndGlyphs">0</text>
<text x="1018.0" y="603.9" font-size="51" fill="#fff" stroke="#fff" stroke-width="1.5" textLength="19.7" lengthAdjust="spacingAndGlyphs">4</text>
<text x="1544.5" y="603.9" font-size="51" fill="#fff" stroke="#fff" stroke-width="1.5" textLength="19.7" lengthAdjust="spacingAndGlyphs">6</text>
<text x="2070.9" y="603.9" font-size="51" fill="#fff" stroke="#fff" stroke-width="1.5" textLength="19.7" lengthAdjust="spacingAndGlyphs">8</text>
<text x="2597.4" y="603.9" font-size="51" fill="#fff" stroke="#fff" stroke-width="1.5" textLength="39.4" lengthAdjust="spacingAndGlyphs">10</text>
<text x="3123.8" y="603.9" font-size="51" fill="#fff" stroke="#fff" stroke-width="1.5" textLength="39.4" lengthAdjust="spacingAndGlyphs">12</text>
<text x="886.5" y="843.8" font-size="51" fill="#fff" stroke="#fff" stroke-width="1.5" textLength="19.7" lengthAdjust="spacingAndGlyphs">0</text>
<text x="1544.5" y="843.8" font-size="51" fill="#fff" stroke="#fff" stroke-width="1.5" textLength="59.1" lengthAdjust="spacingAndGlyphs">372</text>
<text x="1807.7" y="843.8" font-size="51" fill="#fff" stroke="#fff" stroke-width="1.5" textLength="59.1" lengthAdjust="spacingAndGlyphs">496</text>
<text x="2070.9" y="843.8" font-size="51" fill="#fff" stroke="#fff" stroke-width="1.5" textLength="59.1" lengthAdjust="spacingAndGlyphs">629</text>
<text x="2334.2" y="843.8" font-size="51" fill="#fff" stroke="#fff" stroke-width="1.5" textLength="59.1" lengthAdjust="spacingAndGlyphs">756</text>
<text x="2597.4" y="843.8" font-size="51" fill="#fff" stroke="#fff" stroke-width="1.5" textLength="78.8" lengthAdjust="spacingAndGlyphs">1273</text>
<text x="2860.6" y="843.8" font-size="51" fill="#fff" stroke="#fff" stroke-width="1.5" textLength="78.8" lengthAdjust="spacingAndGlyphs">1530</text>
<text x="3123.8" y="843.8" font-size="51" fill="#fff" stroke="#fff" stroke-width="1.5" textLength="78.8" lengthAdjust="spacingAndGlyphs">2018</text>
<text x="886.5" y="923.8" font-size="51" fill="#fff" stroke="#fff" stroke-width="1.5" textLength="157.7" lengthAdjust="spacingAndGlyphs">00000000</text>
<text x="1281.2" y="923.8" font-size="51" fill="#fff" stroke="#fff" stroke-width="1.5" textLength="157.7" lengthAdjust="spacingAndGlyphs">00000011</text>
<text x="1807.7" y="923.8" font-size="51" fill="#fff" stroke="#fff" stroke-width="1.5" textLength="157.7" lengthAdjust="spacingAndGlyphs">00000101</text>
<text x="2334.2" y="923.8" font-size="51" fill="#fff" stroke="#fff" stroke-width="1.5" textLength="157.7" lengthAdjust="spacingAndGlyphs">00000111</text>
<text x="2860.6" y="923.8" font-size="51" fill="#fff" stroke="#fff" stroke-width="1.5" textLength="157.7" lengthAdjust="spacingAndGlyphs">00001001</text>
<text x="886.5" y="1003.8" font-size="51" fill="#fff" stroke="#fff" stroke-width="1.5" textLength="157.7" lengthAdjust="spacingAndGlyphs">00000000</text>
<text x="1807.7" y="1003.8" font-size="51" fill="#fff" stroke="#fff" stroke-width="1.5" textLength="157.7" lengthAdjust="spacingAndGlyphs">00000011</text>
<text x="2334.2" y="1003.8" font-size="51" fill="#fff" stroke="#fff" stroke-width="1.5" textLength="157.7" lengthAdjust="spacingAndGlyphs">00000101</text>
<text x="2860.6" y="1003.8" font-size="51" fill="#fff" stroke="#fff" stroke-width="1.5" textLength="157.7" lengthAdjust="spacingAndGlyphs">00000111</text>
<text x="886.5" y="1083.7" font-size="51" fill="#fff" stroke="#fff" stroke-width="1.5" textLength="157.7" lengthAdjust="spacingAndGlyphs">00000000</text>
<text x="2334.2" y="1083.7" font-size="51" fill="#fff" stroke="#fff" stroke-width="1.5" textLength="157.7" lengthAdjust="spacingAndGlyphs">00000011</text>
<text x="2860.6" y="1083.7" font-size="51" fill="#fff" stroke="#fff" stroke-width="1.5" textLength="157.7" lengthAdjust="spacingAndGlyphs">00000101</text>
<text x="886.5" y="1163.7" font-size="51" fill="#fff" stroke="#fff" stroke-width="1.5" textLength="157.7" lengthAdjust="spacingAndGlyphs">00000000</text>
<text x="2860.6" y="1163.7" font-size="51" fill="#fff" stroke="#fff" stroke-width="1.5" textLength="157.7" lengthAdjust="spacingAndGlyphs">00000011</text>
<text x="886.5" y="1243.7" font-size="51" fill="#fff" stroke="#fff" stroke-width="1.5" textLength="157.7" lengthAdjust="spacingAndGlyphs">00000000</text>
<text x="886.5" y="1323.6" font-size="51" fill="#fff" stroke="#fff" stroke-width="1.5" textLength="157.7" lengthAdjust="spacingAndGlyphs">00000000</text>
<text x="886.5" y="1403.6" font-size="51" fill="#fff" stroke="#fff" stroke-width="1.5" textLength="157.7" lengthAdjust="spacingAndGlyphs">00000000</text>
<text x="886.5" y="1483.6" font-size="51" fill="#fff" stroke="#fff" stroke-width="1.5" textLength="157.7" lengthAdjust="spacingAndGlyphs">00000000</text>
<text x="886.5" y="1563.6" font-size="51" fill="#fff" stroke="#fff" stroke-width="1.5" textLength="157.7" lengthAdjust="spacingAndGlyphs">00000000</text>
<text x="1281.2" y="1563.6" font-size="51" fill="#fff" stroke="#fff" stroke-width="1.5" textLength="157.7" lengthAdjust="spacingAndGlyphs">00000100</text>
<text x="1807.7" y="1563.6" font-size="51" fill="#fff" stroke="#fff" stroke-width="1.5" textLength="157.7" lengthAdjust="spacingAndGlyphs">00000110</text>
<text x="2334.2" y="1563.6" font-size="51" fill="#fff" stroke="#fff" stroke-width="1.5" textLength="157.7" lengthAdjust="spacingAndGlyphs">00001000</text>
<text x="2860.6" y="1563.6" font-size="51" fill="#fff" stroke="#fff" stroke-width="1.5" textLength="157.7" lengthAdjust="spacingAndGlyphs">00001010</text>
<text x="886.5" y="1643.5" font-size="51" fill="#fff" stroke="#fff" stroke-width="1.5" textLength="157.7" lengthAdjust="spacingAndGlyphs">00000000</text>
<text x="1807.7" y="1643.5" font-size="51" fill="#fff" stroke="#fff" stroke-width="1.5" textLength="157.7" lengthAdjust="spacingAndGlyphs">00000100</text>
<text x="2334.2" y="1643.5" font-size="51" fill="#fff" stroke="#fff" stroke-width="1.5" textLength="157.7" lengthAdjust="spacingAndGlyphs">00000110</text>
<text x="2860.6" y="1643.5" font-size="51" fill="#fff" stroke="#fff" stroke-width="1.5" textLength="157.7" lengthAdjust="spacingAndGlyphs">00001000</text>
<text x="886.5" y="1723.5" font-size="51" fill="#fff" stroke="#fff" stroke-width="1.5" textLength="157.7" lengthAdjust="spacingAndGlyphs">00000000</text>
<text x="2334.2" y="1723.5" font-size="51" fill="#fff" stroke="#fff" stroke-width="1.5" textLength="157.7" lengthAdjust="spacingAndGlyphs">00000100</text>
<text x="2860.6" y="1723.5" font-size="51" fill="#fff" stroke="#fff" stroke-width="1.5" textLength="157.7" lengthAdjust="spacingAndGlyphs">00000110</text>
<text x="886.5" y="1803.5" font-size="51" fill="#fff" stroke="#fff" stroke-width="1.5" textLength="157.7" lengthAdjust="spacingAndGlyphs">00000000</text>
<text x="2860.6" y="1803.5" font-size="51" fill="#fff" stroke="#fff" stroke-width="1.5" textLength="157.7" lengthAdjust="spacingAndGlyphs">00000100</text>
</g>
<g filter="url(#bt)">
<line x1="1645.3" y1="689.2" x2="1578.5" y2="787.0" stroke="#c8c8c8" stroke-width="3.4"/>
<line x1="1886.4" y1="726.6" x2="1843.1" y2="787.6" stroke="#c8c8c8" stroke-width="3.4"/>
<text x="1582.0" y="669.6" font-size="64" fill="#fff" stroke="#fff" stroke-width="1.5" textLength="187.0" lengthAdjust="spacingAndGlyphs">Channel I</text>
<text x="1821.5" y="721.8" font-size="64" fill="#fff" stroke="#fff" stroke-width="1.5" textLength="200.0" lengthAdjust="spacingAndGlyphs">Channel II</text>
</g>
<g filter="url(#bl)">
<rect x="882.0" y="1939.0" width="2389.0" height="6.0" fill="#6e6e6e"/>
<path d="M915.3,1851V1869.5M956.4,1851V1869.5M997.5,1851V1869.5M1038.7,1851V1869.5M1079.8,1836V1869.5M1120.9,1851V1869.5M1162.1,1851V1869.5M1203.2,1851V1869.5M1244.3,1851V1869.5M1285.5,1836V1869.5M1326.6,1851V1869.5M1367.7,1851V1869.5M1408.8,1851V1869.5M1450.0,1851V1869.5M1491.1,1836V1869.5M1532.2,1851V1869.5M1573.4,1851V1869.5M1614.5,1851V1869.5M1655.6,1851V1869.5M1696.8,1836V1869.5M1737.9,1851V1869.5M1779.0,1851V1869.5M1820.1,1851V1869.5M1861.3,1851V1869.5M1902.4,1836V1869.5M1943.5,1851V1869.5M1984.7,1851V1869.5M2025.8,1851V1869.5M2066.9,1851V1869.5M2108.1,1836V1869.5M2149.2,1851V1869.5M2190.3,1851V1869.5M2231.4,1851V1869.5M2272.6,1851V1869.5M2313.7,1836V1869.5M2354.8,1851V1869.5M2396.0,1851V1869.5M2437.1,1851V1869.5M2478.2,1851V1869.5M2519.4,1836V1869.5M2560.5,1851V1869.5M2601.6,1851V1869.5M2642.7,1851V1869.5M2683.9,1851V1869.5M2725.0,1836V1869.5M2766.1,1851V1869.5M2807.3,1851V1869.5M2848.4,1851V1869.5M2889.5,1851V1869.5M2930.7,1836V1869.5M2971.8,1851V1869.5M3012.9,1851V1869.5M3054.0,1851V1869.5M3095.2,1851V1869.5M3136.3,1836V1869.5M3177.4,1851V1869.5M3218.6,1851V1869.5M3259.7,1851V1869.5" stroke="#00dc00" stroke-width="4.2" fill="none"/>
</g>
<g filter="url(#bt)">
<text x="1025.5" y="1931.3" font-size="52" fill="#00e000" stroke="#00e000" stroke-width="1.5" textLength="104.6" lengthAdjust="spacingAndGlyphs">200 ns</text>
<text x="1436.8" y="1931.3" font-size="52" fill="#00e000" stroke="#00e000" stroke-width="1.5" textLength="104.6" lengthAdjust="spacingAndGlyphs">250 ns</text>
<text x="1848.1" y="1931.3" font-size="52" fill="#00e000" stroke="#00e000" stroke-width="1.5" textLength="104.6" lengthAdjust="spacingAndGlyphs">300 ns</text>
<text x="2259.4" y="1931.3" font-size="52" fill="#00e000" stroke="#00e000" stroke-width="1.5" textLength="104.6" lengthAdjust="spacingAndGlyphs">350 ns</text>
<text x="2670.7" y="1931.3" font-size="52" fill="#00e000" stroke="#00e000" stroke-width="1.5" textLength="104.6" lengthAdjust="spacingAndGlyphs">400 ns</text>
<text x="3082.0" y="1931.3" font-size="52" fill="#00e000" stroke="#00e000" stroke-width="1.5" textLength="104.6" lengthAdjust="spacingAndGlyphs">450 ns</text>
</g>
<g filter="url(#bl)">
<rect x="1536.5" y="58.0" width="9.4" height="1883.0" fill="#ffe600"/>
<path d="M1536.0,74.5L1545.0,131.3M1536.0,131.3L1545.0,74.5" stroke="#5a3cc0" stroke-width="2.6" stroke-dasharray="9 7" fill="none"/>
<path d="M1536.0,154.5L1545.0,211.3M1536.0,211.3L1545.0,154.5" stroke="#5a3cc0" stroke-width="2.6" stroke-dasharray="9 7" fill="none"/>
<path d="M1536.0,394.4L1545.0,451.2M1536.0,451.2L1545.0,394.4" stroke="#5a3cc0" stroke-width="2.6" stroke-dasharray="9 7" fill="none"/>
<path d="M1536.0,474.4L1545.0,531.1M1536.0,531.1L1545.0,474.4" stroke="#5a3cc0" stroke-width="2.6" stroke-dasharray="9 7" fill="none"/>
<path d="M1536.0,554.3L1545.0,611.1M1536.0,611.1L1545.0,554.3" stroke="#5a3cc0" stroke-width="2.6" stroke-dasharray="9 7" fill="none"/>
<path d="M1536.0,794.2L1545.0,851.0M1536.0,851.0L1545.0,794.2" stroke="#5a3cc0" stroke-width="2.6" stroke-dasharray="9 7" fill="none"/>
<line x1="1536.3" y1="874.2" x2="1545.7" y2="874.2" stroke="#7a46b8" stroke-width="4"/>
<line x1="1536.3" y1="931.0" x2="1545.7" y2="931.0" stroke="#7a46b8" stroke-width="4"/>
<line x1="1536.3" y1="954.2" x2="1545.7" y2="954.2" stroke="#7a46b8" stroke-width="4"/>
<line x1="1536.3" y1="1011.0" x2="1545.7" y2="1011.0" stroke="#7a46b8" stroke-width="4"/>
<line x1="1536.3" y1="1034.1" x2="1545.7" y2="1034.1" stroke="#7a46b8" stroke-width="4"/>
<line x1="1536.3" y1="1090.9" x2="1545.7" y2="1090.9" stroke="#7a46b8" stroke-width="4"/>
<line x1="1536.3" y1="1114.1" x2="1545.7" y2="1114.1" stroke="#7a46b8" stroke-width="4"/>
<line x1="1536.3" y1="1170.9" x2="1545.7" y2="1170.9" stroke="#7a46b8" stroke-width="4"/>
<line x1="1536.3" y1="1194.1" x2="1545.7" y2="1194.1" stroke="#7a46b8" stroke-width="4"/>
<line x1="1536.3" y1="1250.9" x2="1545.7" y2="1250.9" stroke="#7a46b8" stroke-width="4"/>
<line x1="1536.3" y1="1274.0" x2="1545.7" y2="1274.0" stroke="#7a46b8" stroke-width="4"/>
<line x1="1536.3" y1="1330.8" x2="1545.7" y2="1330.8" stroke="#7a46b8" stroke-width="4"/>
<line x1="1536.3" y1="1354.0" x2="1545.7" y2="1354.0" stroke="#7a46b8" stroke-width="4"/>
<line x1="1536.3" y1="1410.8" x2="1545.7" y2="1410.8" stroke="#7a46b8" stroke-width="4"/>
<line x1="1536.3" y1="1434.0" x2="1545.7" y2="1434.0" stroke="#7a46b8" stroke-width="4"/>
<line x1="1536.3" y1="1490.8" x2="1545.7" y2="1490.8" stroke="#7a46b8" stroke-width="4"/>
<line x1="1536.3" y1="1514.0" x2="1545.7" y2="1514.0" stroke="#7a46b8" stroke-width="4"/>
<line x1="1536.3" y1="1570.8" x2="1545.7" y2="1570.8" stroke="#7a46b8" stroke-width="4"/>
<line x1="1536.3" y1="1593.9" x2="1545.7" y2="1593.9" stroke="#7a46b8" stroke-width="4"/>
<line x1="1536.3" y1="1650.7" x2="1545.7" y2="1650.7" stroke="#7a46b8" stroke-width="4"/>
<line x1="1536.3" y1="1673.9" x2="1545.7" y2="1673.9" stroke="#7a46b8" stroke-width="4"/>
<line x1="1536.3" y1="1730.7" x2="1545.7" y2="1730.7" stroke="#7a46b8" stroke-width="4"/>
<line x1="1536.3" y1="1753.9" x2="1545.7" y2="1753.9" stroke="#7a46b8" stroke-width="4"/>
<line x1="1536.3" y1="1810.7" x2="1545.7" y2="1810.7" stroke="#7a46b8" stroke-width="4"/>
<line x1="1544.0" y1="238.4" x2="1544.0" y2="288.4" stroke="#ff4a00" stroke-width="3"/>
<line x1="1544.0" y1="638.3" x2="1544.0" y2="688.3" stroke="#ff4a00" stroke-width="3"/>
<rect x="1482.0" y="1946.0" width="118.0" height="72.0" fill="#000" stroke="#e2b000" stroke-width="4.2"/>
</g>
<g filter="url(#bt)">
<text x="1487.4" y="2006.5" font-size="52" fill="#f6c200" stroke="#f6c200" stroke-width="1.5" textLength="104.6" lengthAdjust="spacingAndGlyphs">256 ns</text>
</g>
</g>
</svg>
</body></html>
